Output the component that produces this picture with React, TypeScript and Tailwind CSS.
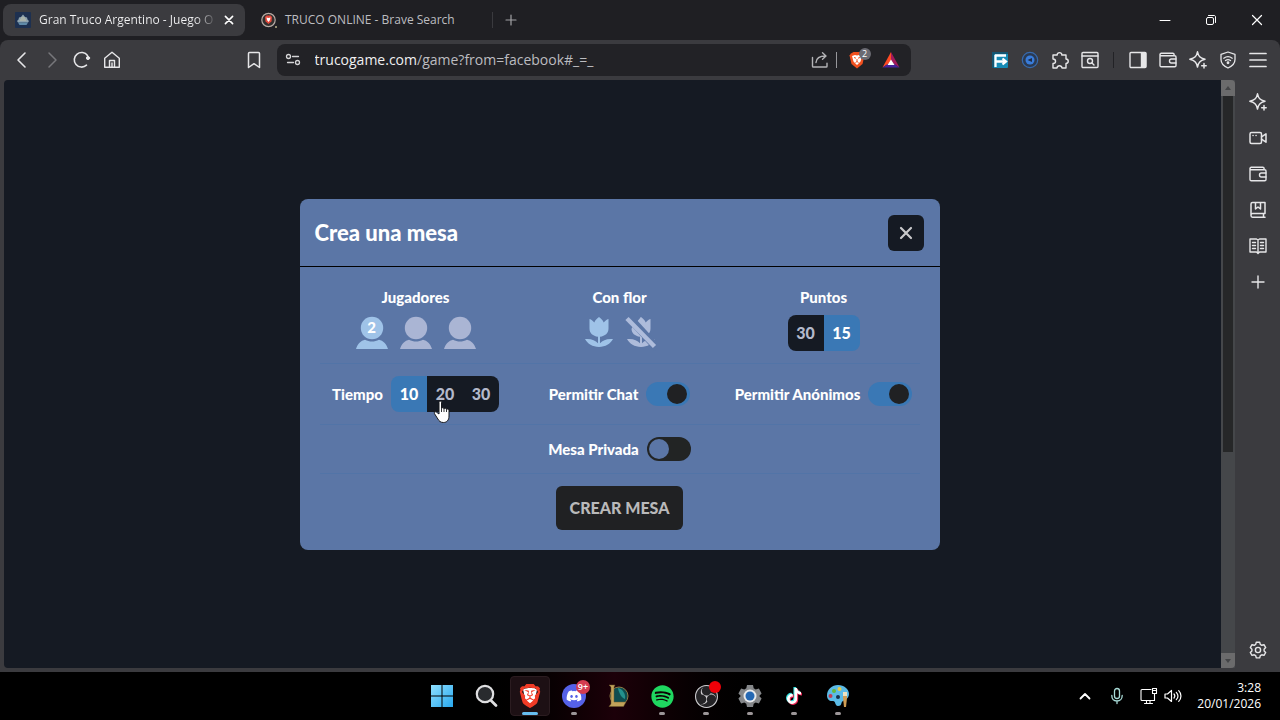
import { useState, type ReactNode } from "react";
import { FaDiscord, FaSpotify, FaTiktok } from "react-icons/fa";
import { SiBrave, SiObsstudio } from "react-icons/si";

function Stroke({ children, size = 20, width = 1.5 }: { children: ReactNode; size?: number; width?: number }) {
  return (
    <svg
      width={size}
      height={size}
      viewBox="0 0 20 20"
      fill="none"
      stroke="currentColor"
      strokeWidth={width}
      strokeLinecap="round"
      strokeLinejoin="round"
      aria-hidden="true"
    >
      {children}
    </svg>
  );
}

const Sparkle = () => (
  <Stroke width={1.5}>
    <path d="M9.500 1.800c1 4.600 2.400 6.200 7.500 7.500-5.100 1.400-6.500 3-7.500 7.700-1-4.700-2.400-6.300-7.700-7.700C7.100 8 8.500 6.400 9.500 1.800Z" />
    <path d="M16 13.500v4.500M13.700 15.800h4.500" />
  </Stroke>
);

const Wallet = () => (
  <Stroke width={1.4}>
    <path d="M2 4.300v11.200c0 .8.500 1.300 1.300 1.300h13.400c.8 0 1.300-.5 1.300-1.300V7c0-.8-.5-1.300-1.300-1.300H3.200C2.500 5.700 2 5.200 2 4.500s.5-1.200 1.200-1.200h11.600c.8 0 1.300.5 1.300 1.200v1.200" />
    <path d="M18 9h-4.600c-1.100 0-1.900.9-1.900 2s.8 2 1.900 2H18" />
  </Stroke>
);

const Gear = () => (
  <Stroke width={1.4}>
    <path d="M8.300 2.200h3.400l.6 2.200 1.500.9 2.200-.6 1.700 2.900L16.100 9.200v1.700l1.600 1.600-1.700 2.900-2.200-.6-1.500.9-.6 2.200H8.300l-.6-2.200-1.500-.9-2.200.6-1.700-2.900 1.600-1.600V9.200L2.300 7.600 4 4.700l2.200.6 1.500-.9Z" />
    <circle cx="10" cy="10" r="2.600" />
  </Stroke>
);

function ToolButton({ label, children, dim = false }: { label: string; children: ReactNode; dim?: boolean }) {
  return (
    <button
      type="button"
      aria-label={label}
      className={`flex h-[30px] w-[30px] shrink-0 items-center justify-center ${dim ? "text-[#77777b]" : "text-[#e6e6e8]"}`}
    >
      {children}
    </button>
  );
}

function TabStrip() {
  return (
    <header className="flex h-10 items-center bg-[#1f1f23]">
      <div className="ml-[3px] flex h-8 w-[242px] items-center rounded-lg bg-[#3b3b3f] pr-2 pl-3">
        <svg width="16" height="16" viewBox="0 0 16 16" aria-hidden="true">
          <rect width="16" height="16" rx="1" fill="#1d3050" />
          <path d="M8 2.500 10 5l2 .5.5 2L14 9l-1 1.500H3L2 9l1.500-1.500.5-2L6 5Z" fill="#8fa3ae" />
          <path d="M3 10.500h10L11.500 13h-7Z" fill="#5f8aa8" />
          <path d="M5 8h6M6 6h4" stroke="#cfc8a4" strokeWidth=".8" />
        </svg>
        <span className="ml-2 bg-linear-to-r from-[#f2f2f3] from-90% to-[#f2f2f3]/20 bg-clip-text text-xs whitespace-nowrap text-transparent">
          Gran Truco Argentino - Juego O
        </span>
        <button type="button" aria-label="Cerrar pestaña" className="ml-auto flex h-4 w-4 items-center justify-center text-white">
          <Stroke size={16} width={2}>
            <path d="m5.500 5.500 9 9M14.500 5.500l-9 9" />
          </Stroke>
        </button>
      </div>
      <div className="flex h-4 w-[248px] items-center border-r border-[#3a3a3e] pl-4">
        <svg width="16" height="16" viewBox="0 0 16 16" aria-hidden="true">
          <circle cx="7.500" cy="8" r="6.700" fill="#33302f" stroke="#b7aaa4" strokeWidth="1.200" />
          <path d="m4 5 1.500-1.500h4L11 5l-.5 4.500-3 2.500-3-2.500Z" fill="#e3473a" />
          <path d="m5.500 5.500 2 .5 2-.5-.5 2.500L7.500 10 6 8Z" fill="#fff" />
          <circle cx="15" cy="15" r="1" fill="#b9b08a" />
        </svg>
        <span className="ml-2 text-xs whitespace-nowrap text-[#bdbdc0]">TRUCO ONLINE - Brave Search</span>
      </div>
      <button type="button" aria-label="Nueva pestaña" className="ml-2 flex h-5 w-5 items-center justify-center text-[#a2a2a6]">
        <Stroke width={1.200}>
          <path d="M10 5v10M5 10h10" />
        </Stroke>
      </button>
      <div className="ml-auto flex text-white">
        <button type="button" aria-label="Minimizar" className="flex h-10 w-[46px] items-center justify-center">
          <Stroke width={1}>
            <path d="M5 10.500h10" />
          </Stroke>
        </button>
        <button type="button" aria-label="Restaurar" className="flex h-10 w-[46px] items-center justify-center">
          <Stroke width={1}>
            <rect x="5.500" y="7.500" width="7" height="7" rx="1.500" />
            <path d="M7.500 5.500H13c1 0 1.500.5 1.500 1.500v5.500" />
          </Stroke>
        </button>
        <button type="button" aria-label="Cerrar" className="flex h-10 w-[46px] items-center justify-center">
          <Stroke width={1.200}>
            <path d="m5.500 5.500 9 9M14.500 5.500l-9 9" />
          </Stroke>
        </button>
      </div>
    </header>
  );
}

function Toolbar() {
  return (
    <nav aria-label="Navegación" className="flex h-10 items-center rounded-t-lg bg-[#3b3b3f] px-[7px]">
      <ToolButton label="Atrás">
        <Stroke width={1.600}>
          <path d="m13 3-7 7 7 7" />
        </Stroke>
      </ToolButton>
      <ToolButton label="Adelante" dim>
        <Stroke width={1.500}>
          <path d="m7 3 7 7-7 7" />
        </Stroke>
      </ToolButton>
      <ToolButton label="Recargar">
        <Stroke width={1.600}>
          <path d="M14.500 15.200A7.300 7.300 0 1 1 15.500 5.500" />
          <circle cx="16" cy="8" r="1.600" fill="currentColor" strokeWidth="1" />
        </Stroke>
      </ToolButton>
      <ToolButton label="Inicio">
        <Stroke width={1.400}>
          <path d="M2.700 8.200 10 2.200l7.300 6v9H2.700Z" />
          <path d="M7.500 17v-6.500h5V17M10 13v4" />
        </Stroke>
      </ToolButton>
      <div className="flex-[3]" />
      <ToolButton label="Marcador">
        <Stroke width={1.500}>
          <path d="M4.500 3.500c0-.6.400-1 1-1h9c.6 0 1 .4 1 1v14L10 13.700 4.500 17.500Z" />
        </Stroke>
      </ToolButton>
      <div className="ml-2 flex h-8 w-[634px] min-w-0 items-center rounded-lg bg-[#222226] pr-2.5">
        <span className="mr-3 ml-1.5 text-[#d4d4d6]">
          <Stroke width={1.300}>
            <circle cx="5.500" cy="6.500" r="2" />
            <circle cx="14.500" cy="12.500" r="2" />
            <path d="M9.500 6.500h6M4.500 12.500h6" />
          </Stroke>
        </span>
        <a href="#mesa" className="min-w-0 flex-1 truncate text-sm text-[#bcbcc0]">
          <span className="text-[#f0f0f1]">trucogame.com</span>/game?from=facebook#_=_
        </a>
        <button type="button" aria-label="Compartir" className="text-[#b4b4b7]">
          <Stroke width={1.400}>
            <path d="M2.500 7.500v8.700c0 .6.300.8.800.8h12.900c.5 0 .8-.3.800-.8v-3" />
            <path d="M6 12.500c.3-4 2.800-6.500 9.500-6.500M12.500 2.800 16 6l-3.500 3.200" />
          </Stroke>
        </button>
        <span className="mx-1.5 h-4 w-px bg-[#97979b]" />
        <button type="button" aria-label="Brave Shields" className="relative mx-1 flex h-6 w-5 items-center justify-center">
          <svg width="18" height="18" viewBox="0 0 18 18" aria-hidden="true">
            <path d="m3 2.500 2.500-1.500h7L15 2.500l1.500 2-2 8.500L9 17.500 3.500 13l-2-8.500Z" fill="#f0501f" />
            <path d="m4 5 3-1 2 .5 2-.5 3 1-1.500 5.500L9 14l-3.500-3.500Z" fill="#fff" />
            <path d="m6 6.500 2 .7M12 6.500l-2 .7M9 8v2.500l-1.500 1M9 10.500l1.500 1" stroke="#f0501f" fill="none" />
          </svg>
          <span className="absolute top-0 left-3 flex h-3 w-3 items-center justify-center rounded-full bg-[#6a6a72] text-[9px] text-white">2</span>
        </button>
        <button type="button" aria-label="Brave Rewards" className="ml-2.5 flex h-6 w-5 items-center justify-center">
          <svg width="18" height="18" viewBox="0 0 18 18" aria-hidden="true">
            <path d="M9 1 .5 16.500 9 11Z" fill="#ff4b24" />
            <path d="M9 1v10l8.500 5.500Z" fill="#a3195b" />
            <path d="M.5 16.500 9 11l8.500 5.500Z" fill="#46229b" />
            <path d="m9 8.500-3.500 5.500h7Z" fill="#fff" />
          </svg>
        </button>
      </div>
      <div className="flex-[2]" />
      <ToolButton label="Extensión FE">
        <svg width="16" height="16" viewBox="0 0 16 16" aria-hidden="true">
          <rect width="16" height="16" rx="1" fill="#168bb5" />
          <path d="M0 0h16v2H2v14H0Z" fill="#155672" />
          <path d="M3 3.500h11M3.500 3v12M3 9.500h10M10.500 6.500l3.500 3-3.500 3" stroke="#fff" strokeWidth="2.300" fill="none" />
        </svg>
      </ToolButton>
      <ToolButton label="Extensión de búsqueda">
        <svg width="18" height="18" viewBox="0 0 18 18" aria-hidden="true">
          <circle cx="9" cy="9" r="7.700" fill="#2a3a52" stroke="#376aad" strokeWidth="1.200" />
          <circle cx="9" cy="9" r="4.500" fill="#397cda" />
          <path d="m6.500 9 4.500-2v4Z" fill="#1f2d45" />
        </svg>
      </ToolButton>
      <ToolButton label="Extensiones">
        <Stroke width={1.400}>
          <path d="M3 5h4.200c-.4-3.200 5-3.200 4.600 0H16v4c3 .2 3 4.300 0 4.500V18h-4c-.4-3-4.700-3-5 0H3v-4.500c3.400 0 3.400-4.500 0-4.500Z" />
        </Stroke>
      </ToolButton>
      <ToolButton label="Buscar en la página">
        <Stroke width={1.400}>
          <rect x="2" y="2.500" width="16" height="15" rx="1" />
          <path d="M2 6h16" />
          <circle cx="10" cy="11" r="2.500" />
          <path d="m12 13 2 2" />
        </Stroke>
      </ToolButton>
      <span className="mr-[9px] ml-2 h-4 w-px bg-[#222226]" />
      <ToolButton label="Panel lateral">
        <Stroke width={1.400}>
          <rect x="2" y="2.500" width="16" height="15" rx="1" />
          <path d="M13.500 3h4v14h-4Z" fill="currentColor" />
        </Stroke>
      </ToolButton>
      <ToolButton label="Cartera"><Wallet /></ToolButton>
      <ToolButton label="Leo"><Sparkle /></ToolButton>
      <ToolButton label="VPN">
        <Stroke width={1.300}>
          <path d="m10 2 7 2.300v5.200c0 4-2.700 6.600-7 8.500-4.300-1.900-7-4.500-7-8.500V4.300Z" />
          <path d="M5.800 8.200c2.600-2 5.800-2 8.400 0M7.500 10.500c1.600-1.200 3.400-1.200 5 0" />
          <circle cx="10" cy="12.800" r=".8" fill="currentColor" />
        </Stroke>
      </ToolButton>
      <ToolButton label="Menú">
        <Stroke width={1.700}>
          <path d="M2 3.500h16M2 10h16M2 16.500h16" />
        </Stroke>
      </ToolButton>
    </nav>
  );
}

function Segmented({ label, options, initial }: { label: string; options: number[]; initial: number }) {
  const [value, setValue] = useState(initial);
  return (
    <div role="group" aria-label={label} className="flex rounded-lg">
      {options.map((option) => (
        <button
          key={option}
          type="button"
          aria-pressed={option === value}
          onClick={() => setValue(option)}
          className={`h-9 w-9 text-base font-black first:rounded-l-lg last:rounded-r-lg ${
            option === value ? "bg-[#3a78b5] text-white" : "bg-[#151a23] text-[#b3b9cb]"
          }`}
        >
          {option}
        </button>
      ))}
    </div>
  );
}

function Toggle({ label, on }: { label: string; on: boolean }) {
  const [checked, setChecked] = useState(on);
  return (
    <label className="flex items-center justify-center gap-2 text-[15px] leading-5 font-black whitespace-nowrap">
      {label}
      <input
        type="checkbox"
        role="switch"
        checked={checked}
        onChange={() => setChecked(!checked)}
        className="flex h-6 w-11 appearance-none items-center rounded-full bg-[#222424] px-0.5 before:h-5 before:w-5 before:rounded-full before:bg-[#5b76a6] checked:bg-[#3a78b5] checked:before:ml-[19px] checked:before:bg-[#202123]"
      />
    </label>
  );
}

function Player({ count, active = false }: { count: number; active?: boolean }) {
  return (
    <button
      type="button"
      aria-label={`${count} jugadores`}
      aria-pressed={active}
      className={`relative h-9 w-8 ${active ? "text-[#9fc3e8]" : "text-[#aab5d4]"}`}
    >
      <svg width="32" height="36" viewBox="0 0 32 36" fill="currentColor" aria-hidden="true">
        <circle cx="16" cy="13" r="11.200" />
        <path d="M0 34c1.500-5.200 5-8.600 9-9.300 4.500 2.400 9.500 2.400 14 0 4 .7 7.500 4.100 9 9.300Z" />
      </svg>
      {active && <span className="absolute inset-x-0 top-0.5 text-center text-[15px] leading-5 font-black text-white">{count}</span>}
    </button>
  );
}

function Tulip({ off = false }: { off?: boolean }) {
  return (
    <button
      type="button"
      aria-label={off ? "Sin flor" : "Con flor"}
      aria-pressed={!off}
      className={off ? "text-[#aebcdb]" : "text-[#9fc3e8]"}
    >
      <svg width="32" height="36" viewBox="0 0 32 36" fill="currentColor" aria-hidden="true">
        <path d="M6.500 4c2.100.7 3.600 1.900 4.800 3.500C12.300 5.200 13.800 3.400 16 2c2.200 1.400 3.700 3.200 4.700 5.500C21.900 5.900 23.400 4.700 25.500 4v9.500c0 4.600-3.400 7.700-8.500 8.200v6.600c2.800-3.300 7-4.900 13-4.300-2.700 5-7.500 7.900-14 7.900S4.700 29 2 24c6-.6 10.200 1 13 4.300v-6.600c-5.100-.5-8.500-3.600-8.500-8.200Z" />
        {off && (
          <>
            <path d="M0-2 33 34" stroke="#5b76a6" strokeWidth="8" />
            <path d="M0 0h15v3L6 14H0Z" fill="#5b76a6" />
            <path d="m2 3.500 27.500 28" stroke="currentColor" strokeWidth="4.500" />
          </>
        )}
      </svg>
    </button>
  );
}

function HandCursor() {
  return (
    <svg width="18" height="24" viewBox="0 0 18 24" className="pointer-events-none" aria-hidden="true">
      <path
        d="M6 2.500c0-1.900 2.500-1.900 2.500 0v6c.5-1.200 2.400-1 2.500.4.600-1.100 2.300-.8 2.500.6.700-.9 2.500-.5 2.500 1.200V16c0 4.200-2.200 6.500-5.500 6.500-3 0-4.400-1.300-5.600-3.500l-3.400-5.300c-.8-1.500.8-2.500 2-1.500L6 14Z"
        fill="#fff"
        stroke="#17181c"
        strokeWidth="1"
      />
      <path d="M8.500 8.500V12M11 9v3M13.500 9.500V12" stroke="#17181c" strokeWidth=".9" />
    </svg>
  );
}

const Divider = () => <hr className="mx-1.5 border-[#5274a7]" />;

function FieldTitle({ children }: { children: ReactNode }) {
  return <h2 className="text-[15px] leading-5 font-black">{children}</h2>;
}

function CreateTable() {
  return (
    <section
      id="mesa"
      role="dialog"
      aria-labelledby="mesa-titulo"
      className="w-full max-w-[640px] rounded-lg bg-[#5b76a6] font-[Lato,'Open_Sans',sans-serif] text-white"
    >
      <div className="flex items-center justify-between border-b border-black p-4 pb-[15px] pl-[15px]">
        <h1 id="mesa-titulo" className="text-[22px] leading-7 font-black">Crea una mesa</h1>
        <button type="button" aria-label="Cerrar ventana" className="flex h-9 w-9 items-center justify-center rounded-md bg-[#151a23] text-[#c9c9cb]">
          <Stroke width={2.200}>
            <path d="m5 5 10 10M15 5 5 15" />
          </Stroke>
        </button>
      </div>
      <div className="px-3.5 pb-5">
        <div className="grid grid-cols-3 pt-5 pb-3">
          <div className="flex flex-col items-center gap-2">
            <FieldTitle>Jugadores</FieldTitle>
            <div className="flex gap-3">
              <Player count={2} active />
              <Player count={4} />
              <Player count={6} />
            </div>
          </div>
          <div className="flex flex-col items-center gap-2">
            <FieldTitle>Con flor</FieldTitle>
            <div className="flex gap-2.5">
              <Tulip />
              <Tulip off />
            </div>
          </div>
          <div className="flex flex-col items-center gap-2">
            <FieldTitle>Puntos</FieldTitle>
            <Segmented label="Puntos" options={[30, 15]} initial={15} />
          </div>
        </div>
        <Divider />
        <div className="grid grid-cols-3 items-center py-3">
          <div className="flex items-center justify-center gap-2">
            <FieldTitle>Tiempo</FieldTitle>
            <div className="relative">
              <Segmented label="Tiempo" options={[10, 20, 30]} initial={10} />
              <div className="absolute top-6 left-[42px]">
                <HandCursor />
              </div>
            </div>
          </div>
          <Toggle label="Permitir Chat" on />
          <Toggle label="Permitir Anónimos" on />
        </div>
        <Divider />
        <div className="flex justify-center py-3">
          <Toggle label="Mesa Privada" on={false} />
        </div>
        <Divider />
        <div className="flex justify-center pt-3">
          <button type="button" className="h-11 rounded-md bg-[#202123] px-3.5 text-base font-black text-[#b9b9ba]">
            CREAR MESA
          </button>
        </div>
      </div>
    </section>
  );
}

function Scrollbar() {
  return (
    <div aria-hidden="true" className="flex w-3.5 flex-col bg-[#45474a]">
      <div className="flex h-4 items-center justify-center rounded-tr bg-[#6b6b6c]">
        <svg width="8" height="6" viewBox="0 0 8 6"><path d="M1 5h6L4 1Z" fill="#444547" /></svg>
      </div>
      <div className="mx-0.5 flex-[356] bg-[#262728]" />
      <div className="flex-[201]" />
      <div className="flex h-[15px] items-center justify-center rounded-br bg-[#6b6b6c]">
        <svg width="8" height="6" viewBox="0 0 8 6"><path d="M1 1h6L4 5Z" fill="#444547" /></svg>
      </div>
    </div>
  );
}

function Sidebar() {
  return (
    <aside className="flex w-[45px] flex-col items-center gap-1.5 py-[7px]">
      <ToolButton label="Leo"><Sparkle /></ToolButton>
      <ToolButton label="Talk">
        <Stroke width={1.500}>
          <rect x="2" y="4.500" width="11.500" height="11" rx="1.500" />
          <path d="m13.500 8.800 4.500-3v8.400l-4.500-3M5 7.500h.1M8 7.500h.1" />
        </Stroke>
      </ToolButton>
      <ToolButton label="Cartera"><Wallet /></ToolButton>
      <ToolButton label="Marcadores">
        <Stroke width={1.500}>
          <path d="M17 13.500V2.500H4.500c-.9 0-1.500.6-1.500 1.500v11.500c0 1 .6 1.700 1.500 1.700H17M17 13.500H4.500c-.9 0-1.500.7-1.500 1.700M15.500 13.500V17" />
          <path d="M7.500 3v6L10 7l2.500 2V3" />
        </Stroke>
      </ToolButton>
      <ToolButton label="Lista de lectura">
        <Stroke width={1.400}>
          <path d="M2 3h6.500L10 4l1.500-1H18v13h-6.500L10 17.500 8.500 16H2ZM10 4v13M4.500 6.500h3M4.500 9.500h3M4.500 12.500h3M12.500 6.500h3M12.500 9.500h3M12.500 12.500h3" />
        </Stroke>
      </ToolButton>
      <ToolButton label="Añadir">
        <Stroke width={1.400}>
          <path d="M10 4v12M4 10h12" />
        </Stroke>
      </ToolButton>
      <div className="mt-auto">
        <ToolButton label="Configuración"><Gear /></ToolButton>
      </div>
    </aside>
  );
}

function TaskIcon({ label, children, state = "none" }: { label: string; children: ReactNode; state?: "none" | "open" | "active" }) {
  return (
    <button
      type="button"
      aria-label={label}
      className="relative flex h-12 w-11 items-center justify-center"
    >
      {state === "active" && <span className="absolute inset-x-0.5 inset-y-1 rounded border border-[#2b1c20] bg-[#1d1014]" />}
      <span className="relative">{children}</span>
      {state === "open" && <span className="absolute bottom-[5px] h-[3px] w-1.5 rounded-full bg-[#9c9698]" />}
      {state === "active" && <span className="absolute bottom-[5px] h-[3px] w-4 rounded-full bg-[#67bdf0]" />}
    </button>
  );
}

function Taskbar() {
  return (
    <footer className="grid h-12 grid-cols-[1fr_auto_1fr] items-center bg-black bg-linear-to-r from-black from-36% via-[#1c0009] via-48% to-black to-62%">
      <div />
      <div className="flex">
        <TaskIcon label="Inicio">
          <svg width="24" height="24" viewBox="0 0 24 24" aria-hidden="true">
            <defs>
              <linearGradient id="win" x2="1" y2="1">
                <stop stopColor="#8fe0ff" />
                <stop offset="1" stopColor="#28a8ee" />
              </linearGradient>
            </defs>
            <path d="M1 1h10.500v10.500H1ZM12.500 1H23v10.500H12.500ZM1 12.500h10.500V23H1ZM12.500 12.500H23V23H12.500Z" fill="url(#win)" />
          </svg>
        </TaskIcon>
        <TaskIcon label="Buscar">
          <svg width="24" height="24" viewBox="0 0 24 24" fill="none" aria-hidden="true">
            <circle cx="11" cy="10" r="8.200" fill="#292b2e" stroke="#dfdfe1" strokeWidth="2.200" />
            <path d="m17 16.500 5 5" stroke="#dfdfe1" strokeWidth="2.800" strokeLinecap="round" />
          </svg>
        </TaskIcon>
        <TaskIcon label="Brave" state="active">
          <svg width="24" height="24" viewBox="0 0 24 24" aria-hidden="true">
            <path d="m5 5 5-1h6l3 1.500L17 15l-5 6-5-6Z" fill="#fff" />
            <g color="#f13b26"><SiBrave size={24} /></g>
          </svg>
        </TaskIcon>
        <TaskIcon label="Discord, 9+ avisos" state="open">
          <span className="flex h-6 w-6 items-center justify-center rounded-full bg-[#5561e8] text-white">
            <FaDiscord size={16} />
          </span>
          <span className="absolute -top-1 left-3.5 flex h-3.5 w-3.5 items-center justify-center rounded-full bg-[#d43c50] text-[9px] font-semibold text-white">9+</span>
        </TaskIcon>
        <TaskIcon label="League of Legends">
          <svg width="24" height="24" viewBox="0 0 24 24" aria-hidden="true">
            <circle cx="13" cy="12" r="9" fill="#0e4d50" stroke="#8d7a45" strokeWidth="1" />
            <path d="M12 4c4 1 8 5 7 11-3-1-6-5-7-11Z" fill="#23918d" />
            <path d="M3 1h6l-1 2v15h12l-2.500 4.500H3l2-2.500V3Z" fill="#c2a35a" stroke="#6d592c" strokeWidth=".5" />
          </svg>
        </TaskIcon>
        <TaskIcon label="Spotify" state="open">
          <span className="block text-[#1fd760]"><FaSpotify size={23} /></span>
        </TaskIcon>
        <TaskIcon label="OBS Studio" state="open">
          <span className="block rounded-full bg-[#242326] text-[#cfcdd0]"><SiObsstudio size={23} /></span>
          <span className="absolute -top-1 left-3.5 h-3 w-3 rounded-full bg-[#f00008]" />
        </TaskIcon>
        <TaskIcon label="Configuración" state="open">
          <svg width="24" height="24" viewBox="0 0 24 24" aria-hidden="true">
            <path d="M9 1h6l.7 3.200 2 1.200 3.200-1 2.700 5L21.200 12l2.400 2.500-2.700 5-3.200-1-2 1.200L15 23H9l-.7-3.300-2-1.200-3.200 1-2.700-5L2.800 12 .4 9.400l2.700-5 3.200 1 2-1.200Z" fill="#85878a" />
            <circle cx="12" cy="12" r="6.500" fill="#e8eaec" />
            <circle cx="12" cy="12" r="4.500" fill="#2568b3" />
          </svg>
        </TaskIcon>
        <TaskIcon label="TikTok" state="open">
          <span className="relative block h-4 w-4">
            <FaTiktok size={16} className="absolute -top-px -left-px text-[#38e0df]" />
            <FaTiktok size={16} className="absolute top-px left-px text-[#ed2655]" />
            <FaTiktok size={16} className="absolute text-white" />
          </span>
        </TaskIcon>
        <TaskIcon label="Paint" state="open">
          <svg width="24" height="24" viewBox="0 0 24 24" aria-hidden="true">
            <path d="M12 1c6 0 11 4 11 9 0 3-2 5-4 6-2 1-3 1-3.500 3-.4 2-1 3-3.500 3-2 0-2.500-2-3-3.500-.4-1.500-1.500-1.500-3-1.500-3 0-5-2-5-5.500C1 5.500 6 1 12 1Z" fill="#5bbbe6" />
            <circle cx="4.500" cy="12" r="2" fill="#c33b52" />
            <circle cx="8" cy="7" r="2" fill="#65b83c" />
            <circle cx="13.500" cy="5" r="2" fill="#e9cc45" />
            <circle cx="12" cy="13" r="2" fill="#15324f" />
            <path d="M17 11h4v3l-1 9h-2l-1-9Z" fill="#cf9d54" />
            <path d="M17 8h4v4h-4Z" fill="#eee2c0" />
          </svg>
        </TaskIcon>
      </div>
      <div className="flex items-center justify-end pr-[19px] text-white">
        <button type="button" aria-label="Mostrar iconos ocultos" className="mr-3">
          <Stroke width={1.800}>
            <path d="m5.500 12.500 4.500-4.500 4.500 4.500" />
          </Stroke>
        </button>
        <span className="mr-3 text-[#a9dcd8]">
          <Stroke width={1.300}>
            <rect x="7.500" y="2.500" width="5" height="10" rx="2.500" />
            <path d="M4.800 9.500c0 3.500 2.200 5.500 5.200 5.500s5.200-2 5.200-5.500M10 15v2.500" />
          </Stroke>
        </span>
        <span className="mr-1">
          <Stroke width={1.100}>
            <path d="M12 3.500H3c-.6 0-1 .4-1 1v9c0 .6.400 1 1 1h12.500V9M7.500 14.500V17M11 14.500V17M5.500 17.500h8M13.500 2.500h4v5h-4ZM15.500 7.500v7M14.500 4.500h2" />
          </Stroke>
        </span>
        <span className="mr-3.5">
          <Stroke width={1.200}>
            <path d="M2 8h2.500L8.500 4.500v11L4.500 12H2ZM11 8c1 1.200 1 2.800 0 4M13.300 6.300c2 2.200 2 5.200 0 7.400M15.700 4.700c3 3 3 7.600 0 10.600" />
          </Stroke>
        </span>
        <div className="text-right text-xs leading-4">
          <div>3:28</div>
          <div>20/01/2026</div>
        </div>
      </div>
    </footer>
  );
}

export default function App() {
  return (
    <div className="flex min-h-screen flex-col bg-[#1f1f23] font-['Open_Sans','Noto_Sans',sans-serif]">
      <TabStrip />
      <Toolbar />
      <div className="flex flex-1 bg-[#3b3b3f]">
        <div className="flex flex-1 pb-1 pl-1">
          <main className="flex flex-1 items-center justify-center rounded-l bg-[#151a23] pl-3.5">
            <CreateTable />
          </main>
          <Scrollbar />
        </div>
        <Sidebar />
      </div>
      <Taskbar />
    </div>
  );
}
